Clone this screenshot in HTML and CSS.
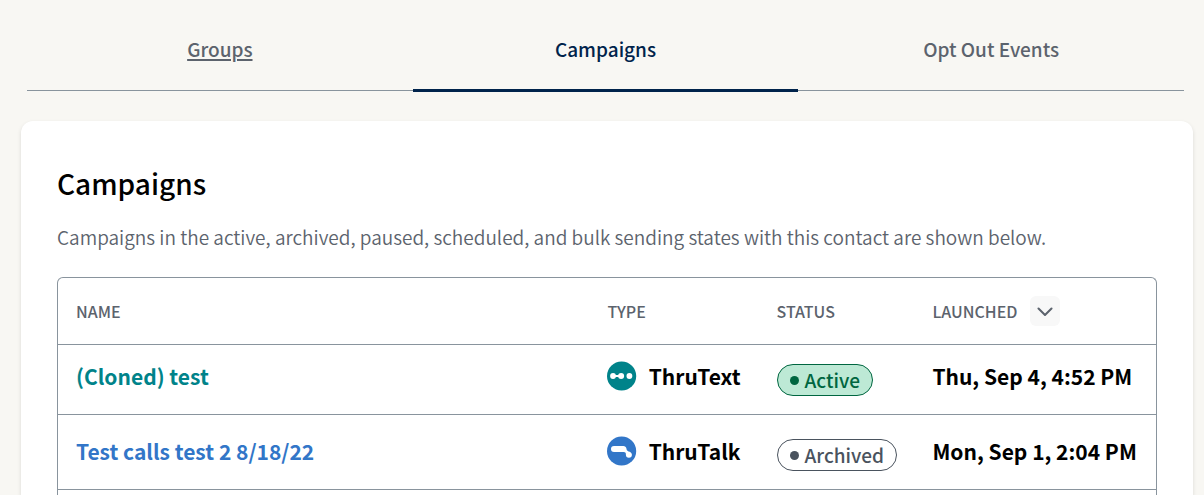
FILE: index.html
```html
<!DOCTYPE html>
<html lang="en">
<head>
<meta charset="utf-8">
<meta name="viewport" content="width=device-width, initial-scale=1">
<title>Campaigns</title>
<link rel="stylesheet" href="styles.css">
</head>
<body>
<nav class="tabs" aria-label="Contact sections">
  <a class="tab tab-hovered" href="#groups"><span>Groups</span></a>
  <a class="tab tab-active" href="#campaigns" aria-current="page"><span>Campaigns</span></a>
  <a class="tab" href="#opt-outs"><span>Opt Out Events</span></a>
</nav>
<main class="card">
  <h1 class="title">Campaigns</h1>
  <p class="intro">Campaigns in the active, archived, paused, scheduled, and bulk sending states with this contact are shown below.</p>
  <div class="table-frame">
    <table class="campaigns">
      <colgroup><col class="col-name"><col class="col-type"><col class="col-status"><col class="col-launched"></colgroup>
      <thead>
        <tr>
          <th scope="col">NAME</th>
          <th scope="col">TYPE</th>
          <th scope="col">STATUS</th>
          <th scope="col">
            <div class="sortable">LAUNCHED
              <button class="sort" type="button" aria-label="Sort by launch date">
                <svg width="16" height="10" viewBox="0 0 16 10" fill="none" stroke="currentColor" stroke-width="2" stroke-linecap="round" stroke-linejoin="round"><path d="M1.500 2.500 8 9l6.500-6.500"/></svg>
              </button>
            </div>
          </th>
        </tr>
      </thead>
      <tbody>
        <tr>
          <td><a class="name name-text" href="#cloned-test">(Cloned) test</a></td>
          <td>
            <div class="type">
              <svg width="30" height="30" viewBox="0 0 30 30" aria-hidden="true"><circle cx="15" cy="15" r="15" fill="#00838a"/><g fill="#fff"><circle cx="6.200" cy="15" r="3"/><circle cx="14.500" cy="15" r="3.100"/><circle cx="23" cy="15" r="3"/><path d="M6 14h8v2H6z"/></g></svg>
              ThruText
            </div>
          </td>
          <td><span class="pill pill-active">Active</span></td>
          <td>Thu, Sep 4, 4:52 PM</td>
        </tr>
        <tr>
          <td><a class="name name-talk" href="#test-calls">Test calls test 2 8/18/22</a></td>
          <td>
            <div class="type">
              <svg width="30" height="30" viewBox="0 0 30 30" aria-hidden="true"><circle cx="15" cy="15" r="15" fill="#3276c8"/><path fill="#fff" d="M7.200 9.800h9.600c1.700 0 2.900 1 3.100 2.500.2 1.500.6 2.600 2.200 3.200 1.600.2 3.500 1.400 3.500 3.400a3.100 3.100 0 0 1-6.200 0c.2-1.500-.4-2.900-2.300-2.900H7.200a3.100 3.100 0 0 1 0-6.200z"/></svg>
              ThruTalk
            </div>
          </td>
          <td><span class="pill pill-archived">Archived</span></td>
          <td>Mon, Sep 1, 2:04 PM</td>
        </tr>
      </tbody>
    </table>
  </div>
</main>
</body>
</html>
```

FILE: styles.css
```css
* { box-sizing: border-box; }

body {
  display: flex;
  flex-direction: column;
  height: 100vh;
  margin: 0;
  padding: 0 11px 0 21px;
  overflow: hidden;
  background: #f8f7f3;
  color: #000;
  font-family: "Noto Sans CJK SC", "Noto Sans", sans-serif;
  font-size: 21px;
  line-height: 30px;
}

.tabs {
  display: grid;
  grid-template-columns: repeat(3, 1fr);
  flex: none;
  margin: 0 9px 0 6px;
  height: 92px;
  background: linear-gradient(#89949d, #89949d) 0 90px / 100% 1px no-repeat;
}

.tab {
  padding-top: 34px;
  color: #5c636d;
  font-size: 19px;
  font-weight: 500;
  text-align: center;
  text-decoration: none;
}

.tab-hovered {
  text-decoration: underline;
  text-decoration-thickness: 2px;
  text-underline-offset: 2px;
}

.tab-active {
  border-bottom: 3px solid #00234b;
  color: #00234b;
}

.card {
  display: flex;
  flex: 1;
  flex-direction: column;
  margin-top: 29px;
  padding: 42px 36px 0;
  border-radius: 12px 12px 0 0;
  background: #fff;
  box-shadow: 0 2px 4px rgba(0, 0, 0, 0.12);
}

.title {
  margin: 0;
  font-size: 28px;
  font-weight: 500;
  line-height: 40px;
}

.intro {
  margin: 19px 0 25px;
  color: #5c636d;
  font-size: 19px;
  font-weight: 350;
}

.table-frame {
  flex: 1;
  border: 1px solid #89949d;
  border-bottom: 0;
  border-radius: 6px 6px 0 0;
}

.campaigns {
  width: 100%;
  border-collapse: collapse;
  table-layout: fixed;
}

.col-name { width: 48.4%; }
.col-type { width: 15.4%; }
.col-status { width: 14.2%; }
.col-launched { width: 22%; }

.campaigns th,
.campaigns td {
  border-bottom: 1px solid #89949d;
  text-align: left;
  white-space: nowrap;
}

.campaigns th {
  padding: 18px;
  color: #5c636d;
  font-size: 16px;
  font-weight: 500;
}

.campaigns td {
  padding: 21px 18px 18px;
  font-weight: 700;
  vertical-align: top;
}

.campaigns tbody tr:first-child td { padding-top: 16px; }

.sortable {
  display: flex;
  align-items: center;
  gap: 12px;
}

.sort {
  display: grid;
  place-items: center;
  width: 30px;
  height: 30px;
  padding: 0;
  border: 0;
  border-radius: 6px;
  background: #f8f8f8;
  color: #5c636d;
}

.name { text-decoration: none; }
.name-text { color: #00838a; }
.name-talk { color: #3276c8; }

.type {
  display: flex;
  align-items: center;
  gap: 12px;
}

.pill {
  display: flex;
  align-items: center;
  gap: 6px;
  width: max-content;
  height: 32px;
  margin-top: 3px;
  padding: 0 12px;
  border: 1px solid currentColor;
  border-radius: 16px;
  font-size: 19px;
  font-weight: 500;
  line-height: 28px;
}

.pill::before {
  width: 9px;
  height: 9px;
  border-radius: 50%;
  background: currentColor;
  content: "";
}

.pill-active {
  background: #bde9d5;
  color: #006640;
}

.pill-archived { color: #4a535e; }
```
